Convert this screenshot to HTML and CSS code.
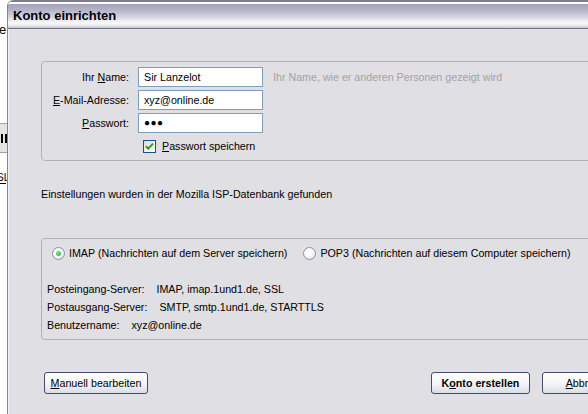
FILE: index.html
```html
<!DOCTYPE html>
<html lang="de">
<head>
  <meta charset="UTF-8" />
  <meta name="viewport" content="width=device-width, initial-scale=1.0" />
  <title>Konto einrichten</title>
  <link rel="stylesheet" href="styles.css">
</head>
<body>

  <div class="screen">
    <!-- bits of the window underneath -->
    <div class="behind">
      <span class="behind-e">e</span>
      <div class="behind-btn"><span class="bar"></span><span class="bar"></span></div>
      <span class="behind-sl">SL</span>
    </div>

    <div class="dialog">
      <div class="titlebar">Konto einrichten</div>

      <div class="dialog-body">
        <div class="group identity">
          <div class="field-row">
            <label class="field-label">Ihr <u>N</u>ame:</label>
            <div class="textbox">Sir Lanzelot</div>
            <span class="hint">Ihr Name, wie er anderen Personen gezeigt wird</span>
          </div>
          <div class="field-row">
            <label class="field-label"><u>E</u>-Mail-Adresse:</label>
            <div class="textbox">xyz@online.de</div>
          </div>
          <div class="field-row">
            <label class="field-label"><u>P</u>asswort:</label>
            <div class="textbox password">&#9679;&#9679;&#9679;</div>
          </div>
          <div class="check-row">
            <span class="checkbox">
              <svg width="13" height="13" viewBox="0 0 13 13">
                <path d="M3 6.2 L5.3 8.6 L10 3.6" fill="none" stroke="#21a121" stroke-width="2" />
              </svg>
            </span>
            <span><u>P</u>asswort speichern</span>
          </div>
        </div>

        <p class="status">Einstellungen wurden in der Mozilla ISP-Datenbank gefunden</p>

        <div class="group protocol">
          <div class="radio-row">
            <span class="radio-option"><span class="radio checked"></span>IMAP (Nachrichten auf dem Server speichern)</span>
            <span class="radio-option"><span class="radio"></span>POP3 (Nachrichten auf diesem Computer speichern)</span>
          </div>
          <div class="server-info">
            <div>Posteingang-Server:<span class="value">IMAP, imap.1und1.de, SSL</span></div>
            <div>Postausgang-Server:<span class="value">SMTP, smtp.1und1.de, STARTTLS</span></div>
            <div>Benutzername:<span class="value">xyz@online.de</span></div>
          </div>
        </div>

        <div class="button-row">
          <button class="btn manual"><u>M</u>anuell bearbeiten</button>
          <button class="btn default">K<u>o</u>nto erstellen</button>
          <button class="btn"><u>A</u>bbrechen</button>
        </div>
      </div>
    </div>
  </div>

</body>
</html>
```

FILE: styles.css
```css
body {
  margin: 0;
  background: #fff;
  font-family: 'Liberation Sans', sans-serif;
  font-size: 10.7px;
  color: #000;
  overflow: hidden;
}

.screen {
  display: flex;
  width: 588px;
  height: 414px;
  overflow: hidden;
}

/* window in the background */
.behind {
  flex: none;
  width: 7px;
  display: flex;
  flex-direction: column;
  overflow: hidden;
}

.behind-e {
  margin-top: 23px;
  font-size: 13px;
  line-height: 14px;
  margin-left: -1px;
}

.behind-btn {
  margin-top: 86px;
  height: 28px;
  background: #e4e4e4;
  border-top: 1px solid #a0a0a0;
  border-bottom: 1px solid #a0a0a0;
  display: flex;
  align-items: center;
  gap: 2px;
  padding-left: 1px;
}

.behind-btn .bar {
  width: 2px;
  height: 9px;
  background: #000;
}

.behind-sl {
  margin-top: 20px;
  font-size: 10px;
  line-height: 10px;
  margin-left: -3px;
  border-bottom: 1px solid #000;
  width: 9px;
}

/* dialog */
.dialog {
  flex: none;
  width: 660px;
  background: #e0dfe3;
  border-left: 1px solid #85859a;
  border-top-left-radius: 6px;
  box-shadow: inset 1px 0 #f4f4f7;
}

.titlebar {
  height: 28px;
  border-bottom: 1px solid #72728a;
  border-top-left-radius: 6px;
  background: linear-gradient(#7d7c96 0, #7d7c96 2px, #fff 2px, #fff 4px, #a4a3bd 4px, #b3b2c9 10px, #d5d5e1 17px, #fafafb 23px, #eeeef3 25px, #c6c6d2 28px);
  padding-left: 5px;
  font-size: 13px;
  font-weight: bold;
  line-height: 31px;
  color: #000;
}

.dialog-body {
  padding: 32px 33px 0 33px;
}

.group {
  border: 1px solid #b2b1b6;
  border-radius: 4px;
}

.identity {
  padding: 5px 0 4px 0;
}

.field-row {
  display: flex;
  align-items: center;
  height: 20px;
  margin-bottom: 3px;
}

.field-label {
  width: 87px;
  text-align: right;
  margin-right: 9px;
}

.textbox {
  width: 118px;
  height: 18px;
  border: 1px solid #7f9db9;
  background: #fff;
  padding-left: 5px;
  line-height: 18px;
}

.textbox.password {
  font-size: 10px;
  letter-spacing: 0.5px;
}

.hint {
  margin-left: 10px;
  color: #a3a2a6;
}

.check-row {
  display: flex;
  align-items: center;
  height: 20px;
  margin-left: 101px;
}

.checkbox {
  width: 13px;
  height: 13px;
  box-sizing: border-box;
  border: 1px solid #1c5180;
  background: linear-gradient(135deg, #dcdcd7, #fff);
  margin-right: 6px;
  display: flex;
}

.checkbox svg {
  margin: -1px;
}

.status {
  margin: 26px 0 0 0;
  line-height: 14px;
}

.protocol {
  margin-top: 37px;
  padding: 5px 0 5px 0;
}

.radio-row {
  display: flex;
  align-items: center;
  height: 18px;
  padding-left: 10px;
  gap: 16px;
}

.radio-option {
  display: flex;
  align-items: center;
}

.radio {
  width: 13px;
  height: 13px;
  box-sizing: border-box;
  border-radius: 50%;
  border: 1px solid #8a93a6;
  background: radial-gradient(circle at 40% 35%, #fff 30%, #d8d8e2);
  margin-right: 4px;
  display: flex;
  align-items: center;
  justify-content: center;
}

.radio.checked::after {
  content: "";
  width: 5px;
  height: 5px;
  border-radius: 50%;
  background: radial-gradient(circle at 40% 35%, #8ee08e, #21a121);
}

.server-info {
  margin-top: 18px;
  padding-left: 5px;
  line-height: 18px;
}

.server-info .value {
  margin-left: 12px;
}

.button-row {
  display: flex;
  margin-top: 32px;
  margin-right: -6px;
  padding-left: 3px;
}

.btn {
  height: 22px;
  width: 99px;
  border: 1px solid #3f4f6b;
  border-radius: 3px;
  background: linear-gradient(#fff, #f6f6f9 50%, #dcdce8);
  font-family: inherit;
  font-size: 10.7px;
  color: #000;
  padding: 0;
}

.btn.manual {
  width: 104px;
}

.btn.default {
  font-weight: bold;
  margin-left: auto;
  margin-right: 12px;
}
```
